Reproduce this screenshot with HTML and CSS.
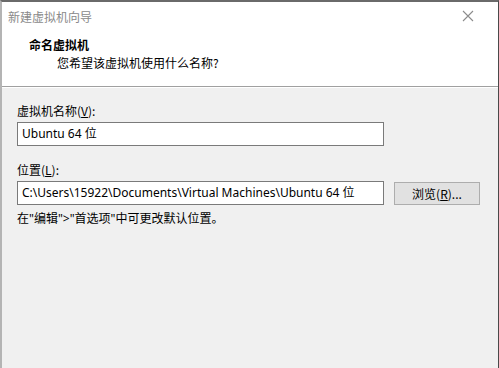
FILE: index.html
```html
<!DOCTYPE html>
<html lang="zh-CN">
<head>
    <meta charset="UTF-8">
    <title>新建虚拟机向导</title>
    <link rel="stylesheet" href="styles.css">
</head>
<body>
    <div class="win">
        <div class="titlebar">
            <span class="title">新建虚拟机向导</span>
            <span class="close">
                <svg width="12" height="12" viewBox="0 0 12 12"><path d="M1 1L11 11M11 1L1 11" stroke="#8c8c8c" stroke-width="1.1"/></svg>
            </span>
        </div>
        <div class="header">
            <div class="h-title">命名虚拟机</div>
            <div class="h-sub">您希望该虚拟机使用什么名称?</div>
        </div>
        <div class="body">
            <div class="label">虚拟机名称(<u>V</u>):</div>
            <div class="input">Ubuntu 64 位</div>
            <div class="label label2">位置(<u>L</u>):</div>
            <div class="row">
                <div class="input">C:\Users\15922\Documents\Virtual Machines\Ubuntu 64 位</div>
                <button class="btn">浏览(<u>R</u>)...</button>
            </div>
            <div class="hint">在"编辑"&gt;"首选项"中可更改默认位置。</div>
        </div>
    </div>
</body>
</html>
```

FILE: styles.css
```css
html, body { margin: 0; padding: 0; background: #5a5a5a; }
body { font-family: "Noto Sans CJK SC", "Noto Sans", sans-serif; font-size: 12px; color: #000; }
.win { height: 368px; background: #f0f0f0; border-left: 2px solid #b4b4b4; border-right: 1px solid #4a4a4a; border-top: 2px solid #6a6a6a; box-sizing: border-box; width: 499px; display: flex; flex-direction: column; }
.titlebar { height: 28px; background: #fff; display: flex; align-items: center; justify-content: space-between; padding: 0 24px 0 6px; }
.title { color: #8a8a8a; font-size: 12px; }
.close { display: flex; }
.header { background: #fff; height: 57px; padding-left: 27px; border-bottom: 1px solid #a0a0a0; box-sizing: border-box; }
.h-title { font-weight: bold; padding-top: 6px; line-height: 18px; }
.h-sub { padding-left: 28px; line-height: 18px; }
.body { padding: 15px 0 0 15px; border-top: 1px solid #fff; }
.label { line-height: 16px; }
.label2 { margin-top: 16px; }
.input { width: 367px; height: 24px; box-sizing: border-box; border: 1px solid #7a7a7a; background: #fff; line-height: 22px; padding-left: 4px; margin-top: 3px; white-space: nowrap; overflow: hidden; font-family: "Noto Sans", "Noto Sans CJK SC", sans-serif; font-size: 12px; }
.row { display: flex; align-items: flex-start; gap: 10px; }
.btn { margin-top: 4px; width: 86px; height: 23px; background: #e1e1e1; border: 1px solid #adadad; font-family: "Noto Sans CJK SC", sans-serif; font-size: 12px; padding: 0; color: #000; }
.hint { margin-top: 5px; line-height: 18px; font-family: "Noto Sans", "Noto Sans CJK SC", sans-serif; }
```
